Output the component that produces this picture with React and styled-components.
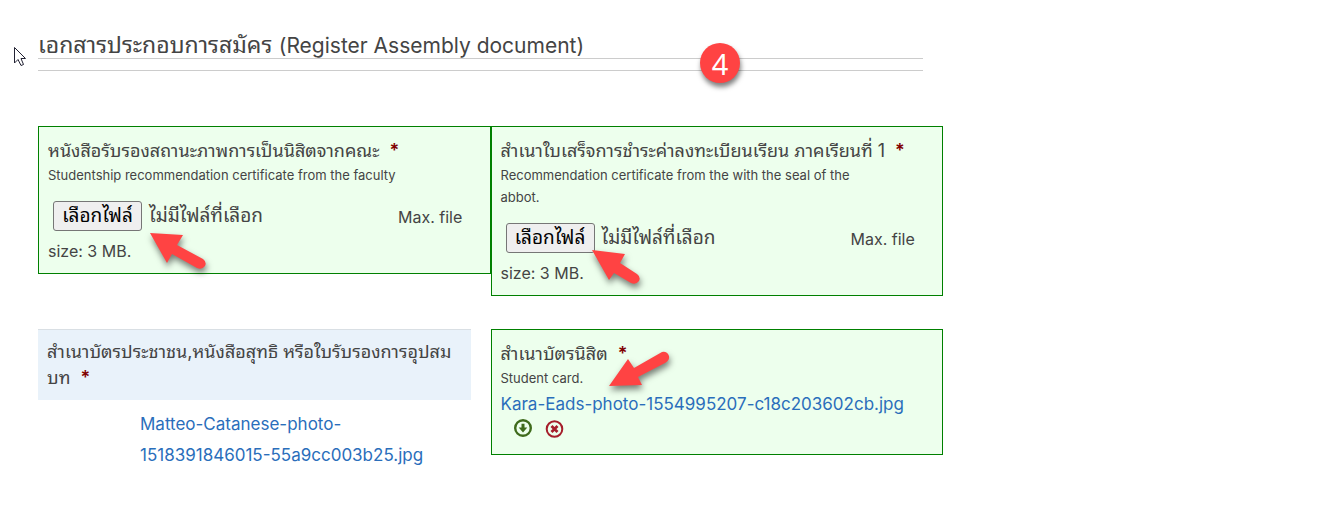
import React from "react";
import styled, { createGlobalStyle } from "styled-components";

const GlobalStyle = createGlobalStyle`
  * { box-sizing: border-box; }
  body {
    margin: 0;
    background: #fff;
    color: #444;
    font-family: Inter, "Noto Sans Thai Looped", Loma, Garuda, "Noto Sans Thai", sans-serif;
    font-size: 16px;
    line-height: 26px;
  }
`;

const Page = styled.main`
  position: relative;
  max-width: 943px;
  padding: 32px 0 56px 38px;
`;

const Title = styled.h1`
  margin: 0 20px 0 0;
  border-bottom: 1px solid #ccc;
  font-size: 23px;
  font-weight: 400;
  line-height: 26px;
`;

const TitleNote = styled.span`
  font-size: 21px;
  line-height: 20px;
`;

const Rule = styled.hr`
  margin: 11px 20px 55px 0;
  border: 0;
  border-top: 1px solid #ccc;
`;

const Fields = styled.form`
  display: grid;
  grid-template-columns: 1fr 1fr;
  row-gap: 33px;
  align-items: start;
`;

const Card = styled.section`
  position: relative;
  padding: 11px 9px ${(p) => (p.$tall ? 15 : 5)}px;
  border: 1px solid green;
  background: #edffed;
`;

const Label = styled.label`
  display: block;
  font-size: 18px;
  line-height: 26px;
`;

const Caption = styled.div`
  font-size: 18px;
  line-height: 26px;
`;

const Star = styled.span`
  margin-left: 10px;
  color: #800000;
  font-size: 18px;
  font-weight: 600;
  line-height: 20px;
`;

const Hint = styled.p`
  margin: 0;
  max-width: 380px;
  font-size: 13px;
  line-height: 22px;
`;

const Upload = styled.div`
  padding-top: 14px;
  line-height: 34px;
`;

const Picker = styled.span`
  display: inline-flex;
  align-items: center;
  gap: 7px;
  width: 346px;
  height: 32px;
  margin-right: 4px;
  padding-left: 5px;
  vertical-align: top;
  font-size: 19px;
  line-height: 32px;
`;

const PickButton = styled.button`
  width: 89px;
  height: 30px;
  padding: 0;
  border: 1px solid #767676;
  border-radius: 3px;
  background: #efefef;
  color: #000;
  font: inherit;
  line-height: 28px;
`;

const FileLink = styled.a`
  color: #2a6ebb;
  font-size: 17px;
  text-decoration: none;
`;

const FileRow = styled.div`
  line-height: 30px;
`;

const Identity = styled.section`
  margin-right: 20px;
`;

const IdentityHead = styled.div`
  padding: 9px;
  border-top: 1px solid #d9dfe4;
  background: #e9f2fa;
  font-size: 18px;
`;

const NoBreak = styled.span`
  display: inline-block;
  white-space: nowrap;
`;

const IdentityFile = styled.div`
  padding: 9px 9px 0 102px;
  line-height: 31px;
`;

const Actions = styled.div`
  display: flex;
  gap: 12px;
  padding-left: 12px;
`;

const IconButton = styled.button`
  display: flex;
  width: 20px;
  height: 20px;
  padding: 0;
  border: 0;
  background: none;
`;

const Badge = styled.span`
  position: absolute;
  top: 43px;
  left: 700px;
  width: 40px;
  height: 40px;
  border-radius: 50%;
  background: #ff4343;
  box-shadow: 1px 4px 5px rgba(0, 0, 0, 0.5);
  color: #fff;
  font-family: "Noto Sans", sans-serif;
  font-size: 29px;
  line-height: 41px;
  text-align: center;
`;

const ArrowSvg = styled.svg`
  position: absolute;
  top: ${(p) => p.$top}px;
  left: ${(p) => p.$left}px;
  overflow: visible;
  filter: drop-shadow(1px 4px 3px rgba(0, 0, 0, 0.5));
  pointer-events: none;
`;

const Cursor = styled.svg`
  position: absolute;
  top: 46px;
  left: 14px;
`;

function PointerUpLeft({ top, left, short }) {
  return (
    <ArrowSvg $top={top} $left={left} width="56" height="36" aria-hidden="true">
      <path
        d={
          short
            ? "M0 0L33 4L28 13L45 24Q49 27 47 31Q44 35 39 33L22 23L17 30Z"
            : "M0 0L33 2L27 12L53 26Q57 29 55 33Q52 37 47 35L22 21L17 30Z"
        }
        fill="#ff4343"
      />
    </ArrowSvg>
  );
}

function PointerDownLeft({ top, left }) {
  return (
    <ArrowSvg $top={top} $left={left} width="60" height="36" aria-hidden="true">
      <path d="M0 34L19 7L25 16L53 0Q58 -1 60 4Q61 8 56 11L29 25L33 33Z" fill="#ff4343" />
    </ArrowSvg>
  );
}

function FileUpload({ id }) {
  return (
    <Upload>
      <Picker>
        <PickButton id={id} type="button">เลือกไฟล์</PickButton>
        <span>ไม่มีไฟล์ที่เลือก</span>
      </Picker>
      <span>Max. file</span> <span>size: 3 MB.</span>
    </Upload>
  );
}

export default function App() {
  return (
    <>
      <GlobalStyle />
      <Page>
        <Title>
          เอกสารประกอบการสมัคร <TitleNote>(Register Assembly document)</TitleNote>
        </Title>
        <Rule />
        <Fields>
          <Card>
            <Label htmlFor="status-file">
              หนังสือรับรองสถานะภาพการเป็นนิสิตจากคณะ<Star>*</Star>
            </Label>
            <Hint>Studentship recommendation certificate from the faculty</Hint>
            <FileUpload id="status-file" />
            <PointerUpLeft top={106} left={111} />
          </Card>
          <Card>
            <Label htmlFor="receipt-file">
              สำเนาใบเสร็จการชำระค่าลงทะเบียนเรียน ภาคเรียนที่ 1<Star>*</Star>
            </Label>
            <Hint>Recommendation certificate from the with the seal of the abbot.</Hint>
            <FileUpload id="receipt-file" />
            <PointerUpLeft top={123} left={100} short />
          </Card>
          <Identity>
            <IdentityHead>
              สำเนาบัตรประชาชน,หนังสือสุทธิ หรือใบรับรองการอุปสม
              <NoBreak>บท<Star>*</Star></NoBreak>
            </IdentityHead>
            <IdentityFile>
              <FileLink href="#identity">Matteo-Catanese-photo-1518391846015-55a9cc003b25.jpg</FileLink>
            </IdentityFile>
          </Identity>
          <Card $tall>
            <Caption>สำเนาบัตรนิสิต<Star>*</Star></Caption>
            <Hint>Student card.</Hint>
            <FileRow>
              <FileLink href="#student-card">Kara-Eads-photo-1554995207-c18c203602cb.jpg</FileLink>
            </FileRow>
            <Actions>
              <IconButton type="button" aria-label="Download">
                <svg width="20" height="20" viewBox="0 0 20 20">
                  <circle cx="10" cy="9" r="7.8" fill="none" stroke="#3f6b1c" strokeWidth="2.4" />
                  <path d="M8.5 4.8h3v3.6h2.8L10 13.4L5.7 8.4h2.8z" fill="#3f6b1c" />
                </svg>
              </IconButton>
              <IconButton type="button" aria-label="Delete">
                <svg width="20" height="20" viewBox="0 0 20 20">
                  <circle cx="9.5" cy="10" r="7.8" fill="none" stroke="#a51e2b" strokeWidth="2" />
                  <path d="M6.5 7l6 6M12.5 7l-6 6" stroke="#a51e2b" strokeWidth="2.8" />
                </svg>
              </IconButton>
            </Actions>
            <PointerDownLeft top={22} left={117} />
          </Card>
        </Fields>
        <Badge>4</Badge>
        <Cursor width="13" height="21" viewBox="0 0 13 21" aria-hidden="true">
          <path d="M0.5 1.5V17L4 13.5L7 19.5L9.5 18.5L7 12.5H11.5Z" fill="#fff" stroke="#223" />
        </Cursor>
      </Page>
    </>
  );
}
